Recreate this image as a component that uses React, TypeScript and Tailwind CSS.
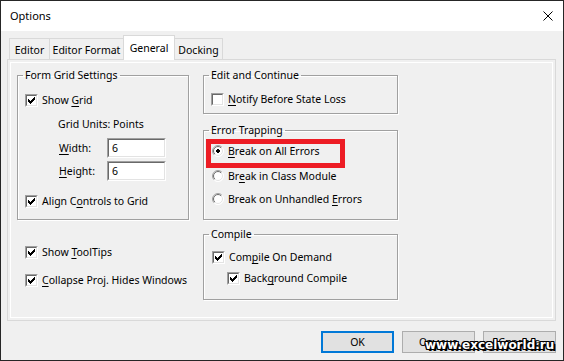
import React from "react";

function Check({ checked }: { checked?: boolean }) {
  return (
    <span className="inline-flex w-[13px] h-[13px] shrink-0 border border-t-[#a0a0a0] border-l-[#a0a0a0] border-r-white border-b-white">
      <span className="flex flex-1 items-center justify-center bg-white border border-t-[#696969] border-l-[#696969] border-r-[#e3e3e3] border-b-[#e3e3e3]">
        {checked && (
          <svg width="7" height="7" viewBox="0 0 7 7" shapeRendering="crispEdges">
            <rect x="0" y="2" width="1" height="3" fill="#000" />
            <rect x="1" y="3" width="1" height="3" fill="#000" />
            <rect x="2" y="4" width="1" height="3" fill="#000" />
            <rect x="3" y="3" width="1" height="3" fill="#000" />
            <rect x="4" y="2" width="1" height="3" fill="#000" />
            <rect x="5" y="1" width="1" height="3" fill="#000" />
            <rect x="6" y="0" width="1" height="3" fill="#000" />
          </svg>
        )}
      </span>
    </span>
  );
}

function Radio({ checked }: { checked?: boolean }) {
  return (
    <svg width="12" height="12" viewBox="0 0 12 12" className="shrink-0">
      <defs>
        <linearGradient id="rgo" x1="0" y1="0" x2="1" y2="1">
          <stop offset="0.45" stopColor="#a0a0a0" />
          <stop offset="0.55" stopColor="#ffffff" />
        </linearGradient>
        <linearGradient id="rgi" x1="0" y1="0" x2="1" y2="1">
          <stop offset="0.45" stopColor="#696969" />
          <stop offset="0.55" stopColor="#e3e3e3" />
        </linearGradient>
      </defs>
      <circle cx="6" cy="6" r="5.5" fill="#fff" stroke="url(#rgo)" strokeWidth="1" />
      <circle cx="6" cy="6" r="4.5" fill="#fff" stroke="url(#rgi)" strokeWidth="1" />
      {checked && (
        <g shapeRendering="crispEdges">
          <rect x="4" y="5" width="4" height="2" fill="#000" />
          <rect x="5" y="4" width="2" height="4" fill="#000" />
        </g>
      )}
    </svg>
  );
}

function Row({ className = "", children }: { className?: string; children: React.ReactNode }) {
  return <div className={"flex items-center h-[20px] " + className}>{children}</div>;
}

function T({ className = "", children }: { className?: string; children: React.ReactNode }) {
  return <span className={"mt-[2px] " + className}>{children}</span>;
}

function Input({ value }: { value: string }) {
  return (
    <div className="flex w-[59px] h-[20px] shrink-0 border border-t-[#a0a0a0] border-l-[#a0a0a0] border-r-white border-b-white">
      <div className="flex flex-1 items-center bg-white pl-[3px] pt-[1px] border border-t-[#696969] border-l-[#696969] border-r-[#e3e3e3] border-b-[#e3e3e3]">
        {value}
      </div>
    </div>
  );
}

const fs =
  "border border-[#a0a0a0] shadow-[inset_1px_1px_0_#ffffff,1px_1px_0_#ffffff] px-[7px] min-w-0";
const lg = "px-[2px] -ml-[2px] leading-[15px]";
const u = "underline underline-offset-[2px] decoration-1";

export default function App() {
  return (
    <div className="relative w-[564px] h-[361px] border border-[#262626] bg-[#f0f0f0] font-['Noto_Sans',sans-serif] text-[10.5px] text-black whitespace-nowrap flex flex-col overflow-hidden">
      {/* Title bar */}
      <div className="h-[30px] bg-white flex items-center justify-between pl-[9px] pr-[10px] shrink-0">
        <span className="text-[11px] mt-[1px]">Options</span>
        <svg width="10" height="10" viewBox="0 0 10 10">
          <path d="M0.5 0.5 L9.5 9.5 M9.5 0.5 L0.5 9.5" stroke="#000" strokeWidth="1" />
        </svg>
      </div>

      {/* Tabs */}
      <div className="pt-[4px] pl-[8px] flex items-end h-[28px] shrink-0">
        <div className="w-[41px] h-[21px] pt-[3px] flex items-center justify-center border border-b-0 border-[#d9d9d9] bg-[#f0f0f0]">
          Editor
        </div>
        <div className="w-[73px] h-[21px] pt-[3px] flex items-center justify-center border-t border-[#d9d9d9] bg-[#f0f0f0]">
          Editor Format
        </div>
        <div className="relative z-10 -mb-px w-[52px] h-[25px] pt-[1px] flex items-center justify-center border border-b-0 border-[#d9d9d9] bg-white">
          General
        </div>
        <div className="w-[48px] h-[21px] pt-[3px] flex items-center justify-center border-t border-r border-[#d9d9d9] bg-[#f0f0f0]">
          Docking
        </div>
      </div>

      {/* Panel */}
      <div className="ml-[6px] mr-[7px] h-[262px] shrink-0 border border-[#d9d9d9] shadow-[inset_0_0_0_2px_#f0f0f0,inset_0_0_0_3px_#ffffff] pt-[8px] pl-[9px] flex gap-[14px]">
        {/* Left column */}
        <div className="w-[172px] flex flex-col">
          <fieldset className={fs + " pb-[8px]"}>
            <legend className={lg}>Form Grid Settings</legend>
            <Row className="mt-[7px]">
              <Check checked />
              <T className="ml-[4px]">
                Show <span className={u}>G</span>rid
              </T>
            </Row>
            <Row className="mt-[4px] pl-[33px]">
              <T className="w-[55px]">Grid Units:</T>
              <T>Points</T>
            </Row>
            <Row className="mt-[4px] pl-[34px]">
              <T className="w-[48px]">
                <span className={u}>W</span>idth:
              </T>
              <Input value="6" />
            </Row>
            <Row className="mt-[3px] pl-[34px]">
              <T className="w-[48px]">
                <span className={u}>H</span>eight:
              </T>
              <Input value="6" />
            </Row>
            <Row className="mt-[10px]">
              <Check checked />
              <T className="ml-[4px]">
                Align C<span className={u}>o</span>ntrols to Grid
              </T>
            </Row>
          </fieldset>
          <Row className="mt-[22px] pl-[8px]">
            <Check checked />
            <T className="ml-[4px]">
              Show <span className={u}>T</span>oolTips
            </T>
          </Row>
          <Row className="mt-[8px] pl-[8px]">
            <Check checked />
            <T className="ml-[4px]">
              <span className={u}>C</span>ollapse Proj. Hides Windows
            </T>
          </Row>
        </div>

        {/* Right column */}
        <div className="w-[195px] flex flex-col">
          <fieldset className={fs + " pb-[4px]"}>
            <legend className={lg}>Edit and Continue</legend>
            <Row className="mt-[6px]">
              <Check />
              <T className="ml-[4px]">
                <span className={u}>N</span>otify Before State Loss
              </T>
            </Row>
          </fieldset>
          <fieldset className={fs + " mt-[9px] pb-[10px]"}>
            <legend className={lg}>Error Trapping</legend>
            <Row className="mt-[3px] pl-[1px]">
              <Radio checked />
              <T className="ml-[4px]">
                <span className={u}>B</span>reak on All Errors
              </T>
            </Row>
            <Row className="mt-[5px] pl-[1px]">
              <Radio />
              <T className="ml-[4px]">
                Br<span className={u}>e</span>ak in Class Module
              </T>
            </Row>
            <Row className="mt-[3px] pl-[1px]">
              <Radio />
              <T className="ml-[4px]">
                Break on Unhandled <span className={u}>E</span>rrors
              </T>
            </Row>
          </fieldset>
          <fieldset className={fs + " mt-[7px] pb-[11px]"}>
            <legend className={lg}>Compile</legend>
            <Row className="mt-[5px] pl-[1px]">
              <Check checked />
              <T className="ml-[4px]">
                Com<span className={u}>p</span>ile On Demand
              </T>
            </Row>
            <Row className="mt-[1px] pl-[16px]">
              <Check checked />
              <T className="ml-[4px]">
                Back<span className={u}>g</span>round Compile
              </T>
            </Row>
          </fieldset>
        </div>
      </div>

      {/* Buttons */}
      <div className="mt-[10px] flex justify-end gap-[8px] pr-[7px]">
        <div className="w-[73px] h-[22px] pt-[1px] flex items-center justify-center bg-[#e1e1e1] border-2 border-[#0078d7]">
          OK
        </div>
        <div className="w-[73px] h-[22px] pt-[1px] flex items-center justify-center bg-[#e1e1e1] border border-[#adadad]">
          Отмена
        </div>
        <div className="w-[73px] h-[22px] pt-[1px] flex items-center justify-center bg-[#e1e1e1] border border-[#adadad]">
          Справка
        </div>
      </div>

      {/* Red highlight */}
      <div className="absolute left-[205px] top-[138px] w-[139px] h-[29px] border-[5px] border-[#ed1c24]" />

      {/* Watermark */}
      <div className="absolute left-[424px] top-[336px] font-['DejaVu_Sans',sans-serif] font-bold text-[12px] leading-[16px] text-white [text-shadow:1px_0_0_#000,-1px_0_0_#000,0_1px_0_#000,0_-1px_0_#000,1px_1px_0_#000,-1px_-1px_0_#000,1px_-1px_0_#000,-1px_1px_0_#000,2px_2px_0_#000]">
        www.excelworld.ru
      </div>
    </div>
  );
}
